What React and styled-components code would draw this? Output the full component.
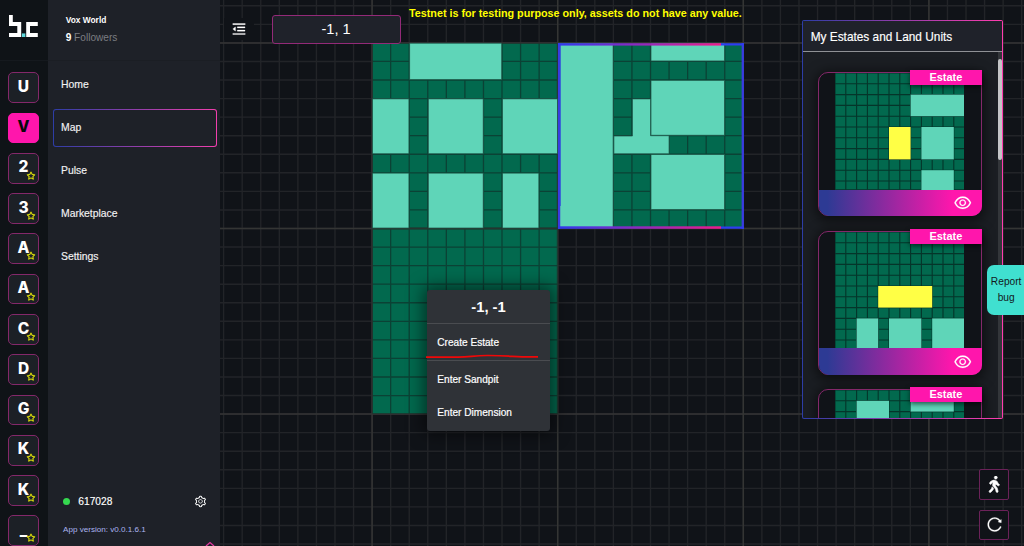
import React from 'react';
import styled, { createGlobalStyle } from 'styled-components';
import {
  AiOutlineEye,
  AiOutlineMenuFold,
  AiOutlineReload,
  AiOutlineSetting,
  AiOutlineStar,
} from 'react-icons/ai';
import { FaWalking } from 'react-icons/fa';

const GlobalStyle = createGlobalStyle`
  * {
    box-sizing: border-box;
  }

  body {
    margin: 0;
    overflow: hidden;
    background: #101318;
    color: #fff;
    font-family: 'Liberation Sans', Arial, sans-serif;
  }
`;

const Layout = styled.div`
  display: grid;
  grid-template-columns: 48px 172px 1fr;
  height: 546px;
  overflow: hidden;
`;

/* ---------- rail with the worlds ---------- */

const Rail = styled.aside`
  display: flex;
  flex-direction: column;
  align-items: center;
  background: #0f1317;
  overflow: hidden;
`;

const LogoBox = styled.div`
  flex: none;
  display: flex;
  justify-content: center;
  width: 100%;
  height: 61px;
  padding: 15px 1px 0 0;
  border-bottom: 1px solid #15191e;
`;

const WorldList = styled.div`
  display: flex;
  flex-direction: column;
  gap: 9.6px;
  padding: 11.3px 2px 0 1px;
`;

const World = styled.button`
  position: relative;
  flex: none;
  display: flex;
  align-items: center;
  justify-content: center;
  width: 30.7px;
  height: 30.7px;
  padding: 0 0 2px;
  border: 1px solid ${({ $active }) => ($active ? '#ff16ac' : '#84286a')};
  border-radius: 5px;
  background: ${({ $active }) => ($active ? '#ff16ac' : '#1c2026')};
  color: ${({ $active }) => ($active ? '#08080c' : '#fff')};
  font-family: Inter, 'Liberation Sans', sans-serif;
  font-size: 15.5px;
  font-weight: 800;
  line-height: 1;
`;

const Star = styled(AiOutlineStar)`
  position: absolute;
  right: 1.7px;
  bottom: 1.7px;
  width: 10px;
  height: 10px;
  color: #f5f50a;
  stroke-width: 25px;
`;

/* ---------- side navigation ---------- */

const Side = styled.nav`
  display: flex;
  flex-direction: column;
  background: #1e2128;
  overflow: hidden;
`;

const SideHead = styled.header`
  height: 61px;
  padding: 14px 17.7px 0;
  border-bottom: 1px solid #1b1e24;
`;

const WorldName = styled.h1`
  margin: 0;
  font-size: 8.4px;
  line-height: 12px;
  font-weight: 700;
`;

const Followers = styled.p`
  margin: 5px 0 0;
  font-size: 10.1px;
  line-height: 13px;
  color: #7b7d82;

  b {
    color: #fff;
  }
`;

const Menu = styled.div`
  display: flex;
  flex-direction: column;
  gap: 4.7px;
  padding: 5px 3px 0 5px;
`;

const MenuItem = styled.a`
  display: flex;
  align-items: center;
  height: 38.4px;
  padding: 0 7px 1.2px;
  border: 1.5px solid transparent;
  border-radius: 3px;
  font-size: 10.4px;
  color: #f2f2f3;
  -webkit-text-stroke: 0.15px currentColor;
  ${({ $active }) =>
    $active &&
    `
    background:
      linear-gradient(#1e2128, #1e2128) padding-box,
      linear-gradient(90deg, #2d3da6, #f23fae) border-box;
  `}
`;

const SideFoot = styled.footer`
  margin-top: auto;
  height: 54px;
  padding: 0 13px 0 15px;
`;

const Status = styled.div`
  display: flex;
  align-items: center;
  height: 18px;
  font-size: 10.2px;
  -webkit-text-stroke: 0.15px currentColor;

  svg {
    width: 13px;
    height: 13px;
    margin-left: auto;
  }
`;

const Dot = styled.span`
  width: 7px;
  height: 7px;
  margin-right: 8.3px;
  border-radius: 50%;
  background: #35d84f;
`;

const Version = styled.p`
  margin: 13px 0 0;
  font-size: 8.1px;
  line-height: 13px;
  color: #aab4f0;
`;

const Handle = styled.svg`
  display: block;
  width: 10px;
  height: 5px;
  margin: 5px -8px 0 auto;
`;

/* ---------- map ---------- */

const Stage = styled.main`
  position: relative;
  overflow: hidden;
`;

const MapCanvas = styled.svg`
  position: absolute;
  inset: 0;
`;

const Toolbar = styled.div`
  position: absolute;
  top: 15px;
  left: 4.3px;
  display: flex;
  align-items: center;
  gap: 17.3px;
`;

const Fold = styled.button`
  display: grid;
  place-items: center;
  width: 30px;
  height: 22px;
  padding: 0;
  border: 0;
  background: #101318;
  color: #fff;

  svg {
    width: 16px;
    height: 16px;
    stroke-width: 20px;
  }
`;

const Coords = styled.div`
  width: 129px;
  height: 28.5px;
  border: 1.2px solid #932a78;
  border-radius: 3px;
  background: #1f222a;
  font-size: 14.6px;
  line-height: 27px;
  text-align: center;
`;

const Notice = styled.p`
  position: absolute;
  top: 6px;
  left: 189px;
  margin: 0;
  color: #ffff00;
  font-size: 10.78px;
  line-height: 14px;
  font-weight: 700;
  white-space: nowrap;
`;

const Popup = styled.div`
  position: absolute;
  top: 289.7px;
  left: 207px;
  width: 123px;
  height: 141.3px;
  border-radius: 3px;
  background: #2f3237;
  box-shadow: 0 0 16px 4px rgba(0, 0, 0, 0.5);
  font-size: 10.1px;
`;

const PopupTitle = styled.h2`
  height: 34px;
  margin: 0;
  border-bottom: 1px solid #4a4c50;
  font-size: 14.8px;
  line-height: 34px;
  text-align: center;
`;

const PopupItem = styled.div`
  height: ${({ $height }) => $height}px;
  line-height: ${({ $height }) => $height}px;
  padding-left: 10.3px;
  -webkit-text-stroke: 0.2px currentColor;
  ${({ $divided }) => $divided && 'border-bottom: 1px solid #4a4c50;'}
`;

const Scribble = styled.svg`
  position: absolute;
  top: 64px;
  left: -1px;
`;

/* ---------- estates panel ---------- */

const Panel = styled.section`
  position: absolute;
  top: 20px;
  left: 582.3px;
  display: flex;
  flex-direction: column;
  width: 200.7px;
  height: 399px;
  border: 1.4px solid transparent;
  border-radius: 2px;
  background:
    linear-gradient(#1b1e23, #1b1e23) padding-box,
    linear-gradient(90deg, #2d3da6, #ff3cae) border-box;
  overflow: hidden;
`;

const PanelTitle = styled.h3`
  flex: none;
  height: 31px;
  margin: 0;
  padding-left: 7.4px;
  border-bottom: 1px solid #8f9195;
  background: #1f222a;
  font-size: 11.85px;
  line-height: 32px;
  font-weight: 400;
  -webkit-text-stroke: 0.15px currentColor;
`;

const PanelBody = styled.div`
  flex: 1;
  display: flex;
  justify-content: space-between;
  min-height: 0;
`;

const Cards = styled.div`
  display: flex;
  flex-direction: column;
  gap: 14.1px;
  padding: 20.1px 14px 0 15px;
  overflow: hidden;
`;

const Card = styled.article`
  position: relative;
  flex: none;
  display: flex;
  flex-direction: column;
  width: 163.6px;
  height: 144.4px;
  border: 1px solid #84286a;
  border-radius: 10px;
  background: #101318;
  box-shadow: 0 2px 12px 3px rgba(0, 0, 0, 0.5);
`;

const Thumb = styled.svg`
  display: block;
  width: 129.6px;
  height: 116.5px;
  margin-left: 15.6px;
`;

const CardFoot = styled.div`
  flex: 1;
  display: flex;
  align-items: center;
  justify-content: flex-end;
  margin: 0 -1px -1px 0;
  padding-right: 9.6px;
  border-radius: 0 0 10px 10px;
  background: linear-gradient(90deg, #2d3a94 5%, #ff16ac 82%);

  svg {
    width: 19.5px;
    height: 19.5px;
    stroke-width: 10px;
  }
`;

const Badge = styled.span`
  position: absolute;
  top: -3px;
  right: -1px;
  width: 72px;
  height: 15.3px;
  background: #ff16ac;
  box-shadow: 0 2px 5px rgba(0, 0, 0, 0.6);
  font-size: 11px;
  line-height: 15px;
  font-weight: 700;
  text-align: center;
`;

const Scrollbar = styled.div`
  flex: none;
  width: 4.4px;
  padding-top: 6.5px;
  background: #33363a;

  &::before {
    content: '';
    display: block;
    height: 101px;
    border-radius: 2px;
    background: #c4c5c7;
  }
`;

const ReportBug = styled.button`
  position: absolute;
  top: 264.5px;
  right: -6px;
  width: 42.7px;
  height: 50.5px;
  padding: 0 5px 0 0;
  border: 0;
  border-radius: 7px;
  background: #40e0d0;
  color: #14181c;
  font-family: inherit;
  font-size: 10.2px;
  line-height: 15.3px;
`;

const Tools = styled.div`
  position: absolute;
  right: 14.7px;
  bottom: 6px;
  display: flex;
  flex-direction: column;
  gap: 9.8px;
`;

const Tool = styled.button`
  display: grid;
  place-items: center;
  width: 30.3px;
  height: 30.5px;
  padding: 0;
  border: 1px solid #6b2259;
  border-radius: 2px;
  background: #101318;
  color: #fff;
  font-size: ${({ $size }) => $size}px;

  svg {
    stroke-width: 18px;
  }
`;

const worlds = ['U', 'V', '2', '3', 'A', 'A', 'C', 'D', 'G', 'K', 'K', '_'];
const menu = ['Home', 'Map', 'Pulse', 'Marketplace', 'Settings'];

const STEP = 18.56;
const ORIGIN_X = 152.1;
const ORIGIN_Y = 42.9;

// [column, row, columns, rows] counted in land units from the map origin
const estates = [
  [2, 0, 5, 2],
  [0, 3, 2, 3],
  [3, 3, 3, 3],
  [7, 3, 3, 3],
  [0, 7, 2, 3],
  [3, 7, 3, 3],
  [7, 7, 2, 3],
  [10, 0, 3, 10],
  [15, 0, 4, 1],
  [15, 2, 4, 3],
  [15, 6, 4, 3],
];

const cards = [
  {
    id: 1,
    own: [5, 5, 2, 3],
    others: [[7, 2, 5, 2], [8, 5, 3, 3], [8, 9, 3, 3]],
  },
  {
    id: 2,
    own: [4, 5, 5, 2],
    others: [[2, 8, 2, 3], [5, 8, 3, 3], [9, 8, 3, 3]],
  },
  {
    id: 3,
    others: [[2, 1, 3, 3], [7, 0, 4, 2]],
  },
];

const gridPath = (from, to, every, x0, y0, step, width, height) => {
  let d = '';
  for (let i = from; i <= to; i += every) {
    d += `M${x0 + i * step} 0V${height}M0 ${y0 + i * step}H${width}`;
  }
  return d;
};

const minorLines = gridPath(-10, 40, 1, ORIGIN_X, ORIGIN_Y, STEP, 804, 546);
const majorLines = gridPath(-10, 40, 10, ORIGIN_X, ORIGIN_Y, STEP, 804, 546);

const LandMap = () => {
  const x = (col) => ORIGIN_X + col * STEP;
  const y = (row) => ORIGIN_Y + row * STEP;

  return (
    <MapCanvas width="804" height="546">
      <defs>
        <linearGradient id="edge" gradientUnits="userSpaceOnUse" x1="338" y1="0" x2="501" y2="0">
          <stop offset="0" stopColor="#3038ee" />
          <stop offset="1" stopColor="#f01a8c" />
        </linearGradient>
        <clipPath id="land">
          <path d={`M${x(0)} ${y(0)}H${x(20)}V${y(10)}H${x(10)}V${y(20)}H${x(0)}Z`} />
        </clipPath>
      </defs>
      <path d={minorLines} stroke="#222428" strokeWidth="1.4" fill="none" />
      <path d={majorLines} stroke="#343534" strokeWidth="1.5" fill="none" />
      <g clipPath="url(#land)">
        <rect width="804" height="546" fill="#02694e" />
        <path d={minorLines} stroke="#0b4235" strokeWidth="1.3" fill="none" />
        <path d={majorLines} stroke="#24352f" strokeWidth="1.8" fill="none" />
      </g>
      <g fill="#5fd5b8" stroke="#1d5547" strokeWidth="0.7">
        {estates.map(([c, r, w, h]) => (
          <rect key={`${c}-${r}`} x={x(c) + 0.5} y={y(r) + 0.3} width={w * STEP - 0.8} height={h * STEP - 0.8} />
        ))}
        <path
          d={`M${x(14) + 0.5} ${y(3) + 0.3}H${x(15)}V${y(5)}H${x(16)}V${y(6) - 0.5}H${x(13) + 0.5}V${y(5) + 0.3}H${x(14) + 0.5}Z`}
        />
      </g>
      <path d="M339.1 43V229M522.8 43V229" stroke="#3a3be0" strokeWidth="2.3" />
      <path d="M340.2 45V206" stroke="#2f4cdc" strokeWidth="1" />
      <rect x="338" y="43.2" width="163" height="2.4" fill="url(#edge)" />
      <rect x="338" y="226.3" width="163" height="2.5" fill="url(#edge)" />
      <path d="M501 44.4H524M501 227.6H524" stroke="#2f3cf0" strokeWidth="2.3" />
    </MapCanvas>
  );
};

const EstateCard = ({ own, others }) => {
  const unit = 10.8;
  const box = ([c, r, w, h], fill) => (
    <rect key={`${c}-${r}`} x={c * unit} y={r * unit} width={w * unit} height={h * unit} fill={fill} />
  );

  return (
    <Card>
      <Thumb viewBox="0 0 129.6 116.5">
        <rect width="129.6" height="116.5" fill="#02694e" />
        <path d={gridPath(0, 12, 1, 0, 0, unit, 129.6, 116.5)} stroke="#05352a" strokeWidth="1.1" fill="none" />
        {others.map((area) => box(area, '#5fd5b8'))}
        {own && box(own, '#ffff45')}
      </Thumb>
      <CardFoot>
        <AiOutlineEye />
      </CardFoot>
      <Badge>Estate</Badge>
    </Card>
  );
};

const App = () => {
  return (
    <>
      <GlobalStyle />
      <Layout>
        <Rail>
          <LogoBox>
            <svg width="29" height="22" viewBox="0 0 29 22" fill="#fff">
              <path d="M0 0H3.8V7H12.2V22H0V18H8.3V11H0Z" />
              <path d="M17.2 7H28.8V11H21V18H28.8V22H17.2Z" />
              <path d="M12.9 18.4H16.4V22H12.9Z" fill="#5fd9dc" />
            </svg>
          </LogoBox>
          <WorldList>
            {worlds.map((letter, i) => (
              <World key={i} $active={letter === 'V'}>
                {letter}
                {i > 1 && <Star />}
              </World>
            ))}
          </WorldList>
        </Rail>

        <Side>
          <SideHead>
            <WorldName>Vox World</WorldName>
            <Followers>
              <b>9</b> Followers
            </Followers>
          </SideHead>
          <Menu>
            {menu.map((label) => (
              <MenuItem key={label} $active={label === 'Map'}>
                {label}
              </MenuItem>
            ))}
          </Menu>
          <SideFoot>
            <Status>
              <Dot />
              617028
              <AiOutlineSetting />
            </Status>
            <Version>App version: v0.0.1.6.1</Version>
            <Handle viewBox="0 0 10 5" fill="none">
              <path d="M1 5L5 1.5L9 5" stroke="#e0389f" strokeWidth="1.3" />
            </Handle>
          </SideFoot>
        </Side>

        <Stage>
          <LandMap />
          <Toolbar>
            <Fold>
              <AiOutlineMenuFold />
            </Fold>
            <Coords>-1, 1</Coords>
          </Toolbar>
          <Notice>Testnet is for testing purpose only, assets do not have any value.</Notice>

          <Popup>
            <PopupTitle>-1, -1</PopupTitle>
            <PopupItem $height={37} $divided>Create Estate</PopupItem>
            <PopupItem $height={37}>Enter Sandpit</PopupItem>
            <PopupItem $height={30}>Enter Dimension</PopupItem>
            <Scribble width="114" height="6" fill="none">
              <path d="M0 3.2H32C46 2.6 48 1.6 61 1.5C80 1.4 86 2.6 96 2.9H112" stroke="#f00808" strokeWidth="1.7" />
            </Scribble>
          </Popup>

          <Panel>
            <PanelTitle>My Estates and Land Units</PanelTitle>
            <PanelBody>
              <Cards>
                {cards.map((card) => (
                  <EstateCard key={card.id} own={card.own} others={card.others} />
                ))}
              </Cards>
              <Scrollbar />
            </PanelBody>
          </Panel>

          <ReportBug>
            Report
            <br />
            bug
          </ReportBug>

          <Tools>
            <Tool $size={16.5}>
              <FaWalking />
            </Tool>
            <Tool $size={17}>
              <AiOutlineReload />
            </Tool>
          </Tools>
        </Stage>
      </Layout>
    </>
  );
};

export default App;
